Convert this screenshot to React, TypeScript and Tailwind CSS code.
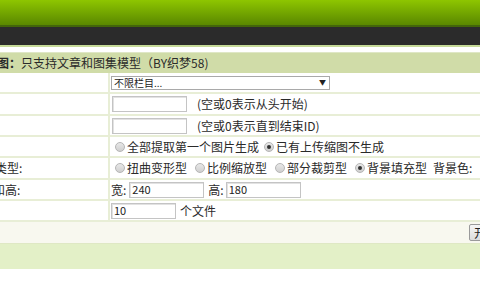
import React from "react";

const Radio = ({ checked = false }: { checked?: boolean }) => (
  <span className="inline-flex items-center justify-center w-[10px] h-[10px] rounded-full border border-[#b5b5b5] bg-gradient-to-b from-[#e8e8e8] to-[#cfcfcf] mr-[2px] shrink-0">
    {checked && <span className="w-[4px] h-[4px] rounded-full bg-[#333]" />}
  </span>
);

const Input = ({ w, value = "" }: { w: string; value?: string }) => (
  <div className={`${w} h-[16px] border border-[#c4c4c4] shadow-[inset_1px_1px_0_#e2e2e2] bg-white flex items-center pl-[2px] text-[11px] leading-none text-[#222] shrink-0`}>
    {value}
  </div>
);

export default function App() {
  const row = "flex border-b-2 border-[#e8eed6] bg-white";
  const left = "w-[110px] shrink-0 border-r-2 border-[#e8eed6] flex items-center overflow-hidden whitespace-nowrap";
  const right = "flex-1 flex items-center whitespace-nowrap overflow-hidden";
  return (
    <div
      className="w-[480px] h-[300px] overflow-hidden bg-white text-[12px] text-[#2a2a2a] leading-none"
      style={{ fontFamily: '"Noto Sans CJK SC", "Noto Sans", sans-serif' }}
    >
      <div className="h-[25px] bg-gradient-to-b from-[#8ec600] to-[#5a8800]" />
      <div className="h-[2px] bg-[#42650a]" />
      <div className="h-[18px] bg-[#2b2b2b]" />
      <div className="h-[2px] bg-[#c6da98]" />
      <div className="h-[5px] bg-white" />
      <div className="h-[1px] bg-[#dfe7c6]" />
      <div className="h-[20px] bg-[#d0dca8] flex items-center whitespace-nowrap overflow-hidden">
        <span className="ml-[-3px] font-bold">图：</span>
        <span>只支持文章和图集模型（BY织梦58)</span>
      </div>
      {/* row 1 */}
      <div className={`${row} h-[21px]`}>
        <div className={left} />
        <div className={`${right} pl-[1px]`}>
          <div className="w-[219px] h-[14px] border border-[#a9a9a9] bg-white flex items-center justify-between px-[2px] text-[10px] text-[#222]">
            <span>不限栏目...</span>
            <span className="text-[7px] mr-[1px]">▼</span>
          </div>
        </div>
      </div>
      {/* row 2 */}
      <div className={`${row} h-[22px]`}>
        <div className={left} />
        <div className={`${right} pl-[2px]`}>
          <Input w="w-[75px]" />
          <span className="ml-[10px]">(空或0表示从头开始)</span>
        </div>
      </div>
      {/* row 3 */}
      <div className={`${row} h-[21px]`}>
        <div className={left} />
        <div className={`${right} pl-[2px]`}>
          <Input w="w-[75px]" />
          <span className="ml-[10px]">(空或0表示直到结束ID)</span>
        </div>
      </div>
      {/* row 4 */}
      <div className={`${row} h-[21px]`}>
        <div className={left} />
        <div className={`${right} pl-[5px]`}>
          <Radio />
          <span>全部提取第一个图片生成</span>
          <span className="ml-[5px]" />
          <Radio checked />
          <span>已有上传缩图不生成</span>
        </div>
      </div>
      {/* row 5 */}
      <div className={`${row} h-[22px]`}>
        <div className={left}>
          <span className="ml-[-5px]">类型:</span>
        </div>
        <div className={`${right} pl-[5px]`}>
          <Radio />
          <span>扭曲变形型</span>
          <span className="ml-[8px]" />
          <Radio />
          <span>比例缩放型</span>
          <span className="ml-[8px]" />
          <Radio />
          <span>部分裁剪型</span>
          <span className="ml-[8px]" />
          <Radio checked />
          <span>背景填充型</span>
          <span className="ml-[6px]">背景色:</span>
        </div>
      </div>
      {/* row 6 */}
      <div className={`${row} h-[21px]`}>
        <div className={left}>
          <span className="ml-[-7px]">和高:</span>
        </div>
        <div className={`${right} pl-[1px]`}>
          <span>宽:</span>
          <span className="ml-[3px]" />
          <Input w="w-[75px]" value="240" />
          <span className="ml-[4px]">高:</span>
          <span className="ml-[2px]" />
          <Input w="w-[75px]" value="180" />
        </div>
      </div>
      {/* row 7 */}
      <div className={`${row} h-[21px]`}>
        <div className={left} />
        <div className={`${right} pl-[1px]`}>
          <Input w="w-[65px]" value="10" />
          <span className="ml-[4px]">个文件</span>
        </div>
      </div>
      {/* row 8 */}
      <div className="h-[22px] bg-[#f8f8ef] border-b border-[#dfe8c4] flex items-center overflow-hidden whitespace-nowrap">
        <div className="ml-[469px] shrink-0 h-[17px] px-[4px] border border-[#9a9a9a] rounded-[2px] bg-gradient-to-b from-[#f6f6f6] to-[#dcdcdc] flex items-center text-[12px] text-[#222]">
          开始生成
        </div>
      </div>
      {/* green row */}
      <div className="h-[25px] bg-[#e3f0c7]" />
    </div>
  );
}
